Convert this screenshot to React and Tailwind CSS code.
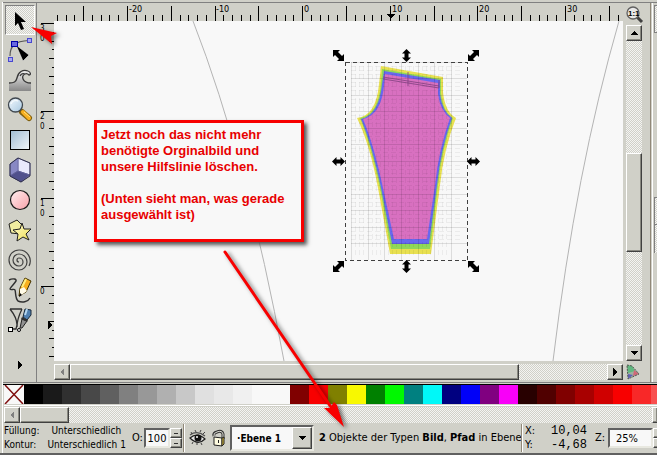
import React from 'react';

const STIPPLE =
  'bg-[repeating-conic-gradient(#f4f4f2_0_25%,#d0d0c8_0_50%)] bg-[length:2px_2px]';
const RAISED =
  'border border-t-white border-l-white border-r-[#404040] border-b-[#404040] bg-[#d0d0c8] shadow-[inset_-1px_-1px_0_#888880]';
const UI_FONT = "font-['DejaVu_Sans_Condensed','DejaVu_Sans',sans-serif]";

const SWATCHES = [
  '#000000', '#1a1a1a', '#303030', '#484848', '#606060', '#808080', '#989898',
  '#b0b0b0', '#c8c8c8', '#e0e0e0', '#e8e8e8', '#f0f0f0', '#f8f8f8', '#f8f8f8',
  '#800000', '#f80000', '#808000', '#f8f800', '#008000', '#00f800', '#008080',
  '#00f8f8', '#000080', '#0000f8', '#800080', '#f800f8', '#280000', '#500000',
  '#800000', '#a80000', '#d00000', '#f80000', '#f82828', '#f85050', '#f87878',
];

function Triangle({ dir, color = '#000' }) {
  const paths = {
    up: 'M0 6 4 2 8 6z',
    down: 'M0 2h8L4 6z',
    left: 'M6 0v8L2 4z',
    right: 'M2 0v8l4-4z',
  };
  return (
    <svg width="8" height="8" viewBox="0 0 8 8" shapeRendering="crispEdges">
      <path d={paths[dir]} fill={color} />
    </svg>
  );
}

function ScrollButton({ dir, color }) {
  return (
    <button
      type="button"
      aria-label={`Scroll ${dir}`}
      className={`flex h-4 w-4 shrink-0 items-center justify-center ${RAISED}`}
    >
      <Triangle dir={dir} color={color} />
    </button>
  );
}

const TOOLS = [
  {
    name: 'Select',
    art: <path d="M10 7v14l3-3 3 7 3-1-3-7h5z" fill="#000" />,
  },
  {
    name: 'Edit nodes',
    art: (
      <g>
        <path d="M5 21C5 12 9 6 24 5.500" fill="none" stroke="#555" strokeWidth="1.200" />
        <rect x="3.500" y="22.500" width="4" height="4" fill="#a8a8f0" stroke="#4848d0" />
        <rect x="22.500" y="3.500" width="4" height="4" fill="#a8a8f0" stroke="#4848d0" />
        <path d="M11 10l13 10-6 6z" fill="#000" stroke="#fff" strokeWidth=".5" />
        <rect x="6.500" y="6.500" width="6" height="5" fill="#6868e0" stroke="#0000a8" />
      </g>
    ),
  },
  {
    name: 'Tweak',
    art: (
      <g>
        <path d="M4 26v-8c5 0 7-1 8-5 1-6 6-9 12-7 3 1 3 4 1 5-1-3-6-3-6 1 0 5 3 6 7 6v8z" fill="url(#tweak)" />
        <path d="M4 18c5 0 7-1 8-5 1-6 6-9 11-7 3 1 3 4 1 4-1-1-2-2-4-1-4 2-3 9 6 9M15 11c1-2 3-3 5-2" fill="none" stroke="#383838" strokeWidth="1.300" />
      </g>
    ),
  },
  {
    name: 'Zoom',
    art: (
      <g>
        <path d="M17 17l7 6" stroke="#806010" strokeWidth="6" strokeLinecap="round" />
        <path d="M18 17l6 6" stroke="#f8b020" strokeWidth="4" strokeLinecap="round" />
        <path d="M19 17l6 5" stroke="#ffe080" strokeWidth="1" />
        <circle cx="10.500" cy="10" r="7" fill="url(#glass)" stroke="#404850" strokeWidth="1.300" />
        <path d="M6 9c1-3 4-4 7-3" fill="none" stroke="#fff" />
      </g>
    ),
  },
  {
    name: 'Rectangle',
    art: <rect x="5.500" y="5.500" width="19" height="19" fill="url(#box)" stroke="#000" />,
  },
  {
    name: '3D box',
    art: (
      <g strokeWidth="1" strokeLinejoin="round">
        <path d="M13 3l12 5v13l-9 6-11-6V9z" fill="#a8a8e0" />
        <path d="M13 3l12 5v12l-12-4z" fill="#e8e8fc" stroke="#9090c0" />
        <path d="M13 3v13l-8 5V9z" fill="#8888c4" stroke="#7070a8" />
        <path d="M5 21l8-5 12 4-9 7z" fill="#50508c" stroke="#606098" />
        <path d="M5 9l8-6 12 5v13l-9 6-11-6z" fill="none" stroke="#303048" />
      </g>
    ),
  },
  {
    name: 'Ellipse',
    art: <circle cx="15" cy="15" r="9.500" fill="url(#pink)" stroke="#181818" strokeWidth="1.200" />,
  },
  {
    name: 'Star',
    art: (
      <g stroke="#202020" strokeLinejoin="round">
        <path d="M4 9l8-4 6 6-3 8-9-1z" fill="#f0eca0" />
        <path d="M17 8l2 6 7 0-5 5 3 6-6-3-6 4 1-7-5-4 7-1z" fill="url(#gold)" />
      </g>
    ),
  },
  {
    name: 'Spiral',
    art: (
      <path
        d="M14 17a2 2 0 0 1 0-4a4 4 0 0 1 0 8a6 6 0 0 1 0-12a8 8 0 0 1 0 16a10 10 0 0 1 0-20a11 11 0 0 1 10 16"
        fill="none" stroke="#404040" strokeWidth="1.200"
      />
    ),
  },
  {
    name: 'Pencil',
    art: (
      <g>
        <path d="M4 5c4-2 8-1 7 1-2 3-6 7-6 8 1 2 4-1 5 1 1 3 0 8 3 11 4 2 10 1 12-3" fill="none" stroke="#303030" strokeWidth="1.400" />
        <path d="M14 21l1-8 5-10 6 3-5 11z" fill="#f8b020" stroke="#403000" strokeLinejoin="round" />
        <path d="M15 14l4-2 3 4-7 5z" fill="#fffbe8" />
        <path d="M17 12l4-8" stroke="#fff080" strokeWidth="2" />
        <path d="M14 22l1-4 2 2z" fill="#000" />
      </g>
    ),
  },
  {
    name: 'Calligraphy',
    art: (
      <g>
        <path d="M5 4h12M5 4c4 5 7 11 7 16l-1 4H6M17 4c-2 4-5 10-5 18" fill="none" stroke="#303030" strokeWidth="1.300" />
        <rect x="3.500" y="22.500" width="4" height="4" fill="#fff" stroke="#000" />
        <circle cx="14" cy="25" r="1.500" fill="#fff" stroke="#000" />
        <path d="M15 23l2-9 5 2-5 7z" fill="#909090" stroke="#202020" />
        <path d="M18 12l2-8 6 1 0 5-4 5z" fill="#5080b0" stroke="#182838" />
        <path d="M20 10l2-6" stroke="#b8d8f0" strokeWidth="2" />
        <path d="M17 12l6 3-1 2-6-3z" fill="#303030" />
      </g>
    ),
  },
];

function Gradients() {
  return (
    <svg width="0" height="0" className="absolute" aria-hidden="true">
      <defs>
        <linearGradient id="tweak" x2="0" y2="1"><stop stopColor="#f0f0f0" /><stop offset="1" stopColor="#888" /></linearGradient>
        <linearGradient id="glass" x2="1" y2="1"><stop stopColor="#f4faff" /><stop offset="1" stopColor="#a8c8e0" /></linearGradient>
        <linearGradient id="box" x2="1" y2="1"><stop stopColor="#a0bcd4" /><stop offset="1" stopColor="#f0f6fa" /></linearGradient>
        <linearGradient id="pink" x2="1" y2="1"><stop stopColor="#fff0f0" /><stop offset="1" stopColor="#f8a0a8" /></linearGradient>
        <linearGradient id="gold" x2="1" y2="1"><stop stopColor="#fffcd0" /><stop offset="1" stopColor="#f0e050" /></linearGradient>
      </defs>
    </svg>
  );
}

function Toolbox() {
  return (
    <div className="flex w-[33px] shrink-0 flex-col items-center border-r border-[#808080] pt-[2px]">
      {TOOLS.map((tool, i) => (
        <button
          key={tool.name}
          type="button"
          aria-label={tool.name}
          className={`h-[30px] w-[30px] shrink-0 ${i === 0 ? `${STIPPLE} border border-t-[#808080] border-l-[#808080] border-r-white border-b-white` : ''}`}
        >
          <svg width="30" height="30" viewBox="0 0 30 30" className={i === 0 ? '-m-px' : ''}>{tool.art}</svg>
        </button>
      ))}
      <button type="button" aria-label="More tools" className="mt-auto mb-3 flex h-[10px] w-[30px] items-center justify-center">
        <Triangle dir="right" />
      </button>
    </div>
  );
}

const TOP_TICKS = Array.from({ length: 65 }, (_, i) => i);
const SIDE_TICKS = Array.from({ length: 39 }, (_, i) => i);

function TopRuler() {
  return (
    <svg width="569" height="18" viewBox="54 3 569 18" className="block shrink-0" shapeRendering="crispEdges">
      {TOP_TICKS.map((i) => {
        const x = Math.round(127 + (i - 8) * 8.76);
        const top = (i - 8) % 5 === 0 ? 6 : 15;
        return <rect key={i} x={x} y={top} width="1" height={21 - top} />;
      })}
      {[-20, -10, 0, 10, 20, 30].map((n) => (
        <text key={n} x={Math.round(304 + n * 8.76)} y="12" className="font-['DejaVu_Sans_Condensed','DejaVu_Sans',sans-serif] text-[9px]">{n}</text>
      ))}
      <path d="M386 14h9l-4 5z" />
    </svg>
  );
}

function SideRuler() {
  return (
    <svg width="17" height="358" viewBox="37 3 17 358" className="block shrink-0" shapeRendering="crispEdges">
      {SIDE_TICKS.map((i) => {
        const w = i % 10 === 0 ? 13 : i % 2 === 0 ? 5 : 2;
        return <rect key={i} x={54 - w} y={Math.round(23 + i * 8.76)} width={w} height="1" />;
      })}
      {['30', '20', '10', '0'].map((label, i) =>
        label.split('').map((digit, j) => (
          <text key={`${label}${j}`} x="40" y={Math.round(31 + i * 87.6) + j * 10} className="font-['DejaVu_Sans_Condensed','DejaVu_Sans',sans-serif] text-[8px]">{digit}</text>
        )),
      )}
      <path d="M48 321v8l5-4z" />
    </svg>
  );
}

const HANDLE = 'M-6.500 0l4.500-4.500v2.500h4v-2.500l4.500 4.500-4.500 4.500v-2.500h-4v2.500z';
const CORNER = 'M-5.500-5.500h7l-2 2 4 4 2-2v7h-7l2-2-4-4-2 2z';
const HANDLES = [
  [338.5, 55.5, 0, CORNER], [406.5, 55.5, 90, HANDLE], [473.5, 55.5, 90, CORNER],
  [338.5, 161.5, 0, HANDLE], [473.5, 161.5, 0, HANDLE],
  [338.5, 266.5, 90, CORNER], [406.5, 266.5, 90, HANDLE], [473.5, 266.5, 0, CORNER],
];
const GRID_X = [351, 368, 384, 401, 418, 434, 451];
const GRID_Y = [62, 78, 95, 111, 128, 144, 161, 177, 194, 210, 227, 243];

function Drawing() {
  return (
    <svg width="569" height="340" viewBox="54 21 569 340" className="block">
      <g fill="none" stroke="#b4b4b4">
        <path d="M193 21Q247 160 284 361" />
        <path d="M619 21Q576 170 553 361" />
      </g>
      <path d="M381 66L443 77V92Q445 112 456 118Q444 148 440 185L431 254H390L378 188Q370 145 357 118Q376 116 379 84z" fill="#e8e050" />
      <path d="M382 69L441 79V93Q443 112 453 118Q442 148 438 185L430 249H391L380 188Q371 145 360 118Q378 115 381 84z" fill="#90d858" />
      <path d="M384 71L440 80V94Q442 111 452 118Q441 148 437 185L429 244H392L381 188Q372 145 361 119Q379 115 382 84z" fill="#6868f0" />
      <path d="M385 74L438 83V94Q440 110 450 118Q439 148 435 185L427 239H394L383 188Q374 145 363 119Q381 115 384 86z" fill="#d870c0" />
      <g stroke="#000" shapeRendering="crispEdges">
        <g strokeOpacity=".05" strokeDasharray="5 3">
          {GRID_X.slice(0, -1).map((x) => [4, 8, 12].map((d) => <path key={x + d} d={`M${x + d}.5 66V256`} />))}
          {GRID_Y.slice(0, -1).map((y) => [4, 8, 12].map((d) => <path key={y + d} d={`M351 ${y + d}.5H462`} />))}
        </g>
        <g strokeOpacity=".11">
          {GRID_X.map((x) => <path key={x} d={`M${x}.5 62V260`} />)}
          {GRID_Y.map((y) => <path key={y} d={`M351 ${y}.5H467`} />)}
        </g>
      </g>
      <path d="M383 77l56 9M383 79l56 9M408 72v14M439 80v8" stroke="#804080" strokeOpacity=".8" fill="none" />
      <rect x="345.500" y="62.500" width="122" height="198" fill="none" stroke="#404040" strokeDasharray="4 3" shapeRendering="crispEdges" />
      {HANDLES.map(([x, y, r, d]) => (
        <path key={`${x}-${y}`} d={d} transform={`translate(${x} ${y}) rotate(${r})`} />
      ))}
    </svg>
  );
}

function Canvas() {
  return (
    <div className="relative min-h-0 flex-1 overflow-hidden bg-[#f8f8f8]">
      <Drawing />
      <p className="absolute top-[99px] left-[40px] h-[122px] w-[210px] border-3 border-[#f80000] bg-[#f8f8f8] px-1 pt-1 font-['Liberation_Sans',sans-serif] text-[13px] leading-4 font-bold whitespace-nowrap text-[#e80000] shadow-[3px_3px_4px_#555]">
        Jetzt noch das nicht mehr<br />
        benötigte Orginalbild und<br />
        unsere Hilfslinie löschen.<br />
        <br />
        (Unten sieht man, was gerade<br />
        ausgewählt ist)
      </p>
    </div>
  );
}

function RightScroll() {
  return (
    <div className="flex w-[27px] shrink-0 flex-col items-start pt-[2px] pl-[3px]">
      <button type="button" aria-label="Zoom 1:1" className="h-5 w-4 shrink-0">
        <svg width="18" height="18" viewBox="0 0 18 18">
          <path d="M11 11l5 5" stroke="#404040" strokeWidth="3" />
          <circle cx="7" cy="7" r="6" fill="#e8e8e8" stroke="#606060" strokeWidth="1.300" />
          <text x="2" y="10" className="font-['Liberation_Sans',sans-serif] text-[8px] font-bold">1:1</text>
        </svg>
      </button>
      <div className={`flex min-h-0 w-4 flex-1 flex-col ${STIPPLE}`}>
        <ScrollButton dir="up" />
        <div className="flex-[112]" />
        <div className={`h-[99px] ${RAISED}`} />
        <div className="flex-[93]" />
        <ScrollButton dir="down" />
      </div>
      <svg width="16" height="21" viewBox="0 0 16 21" className="shrink-0">
        <path d="M1 4l5 1 7 8-11 5z" fill="#a0b0a0" />
        <path d="M1 4l5 1 3 5-7 2z" fill="#60b880" />
        <path d="M8 9l5 4-6 2z" fill="#d06878" />
        <path d="M2 13l5 1-5 4z" fill="#6060b8" />
        <path d="M1 4l5 1 7 8-11 5z" fill="none" stroke="#505850" strokeDasharray="2 1" />
      </svg>
    </div>
  );
}

function DockEdge() {
  return (
    <div className="flex w-[7px] shrink-0 flex-col border-l border-[#908878] pl-px">
      <div className="flex flex-1 flex-col border-l border-white pt-[2px] pl-px">
        <div className={`h-7 border border-r-0 border-[#808080] ${STIPPLE}`} />
        <div className="h-[164px]" />
        <div className={`h-7 border border-r-0 border-[#808080] ${STIPPLE}`} />
        <div className={`h-7 border-l border-[#808080] ${STIPPLE}`} />
      </div>
    </div>
  );
}

function Palette() {
  return (
    <div className="flex h-[19px] shrink-0 overflow-hidden">
      <button type="button" aria-label="None" className="h-[19px] w-5 shrink-0 bg-[#f8f8f8]">
        <svg width="20" height="19" viewBox="0 0 20 19" className="block">
          <path d="M1 0l18 19M19 0L1 19" stroke="#801010" strokeWidth="1.500" />
        </svg>
      </button>
      {SWATCHES.map((color, i) => (
        <button key={i} type="button" aria-label={color} className="h-[19px] w-[19px] shrink-0" style={{ backgroundColor: color }} />
      ))}
    </div>
  );
}

function Spin() {
  return (
    <div className="flex h-5 w-3 shrink-0 flex-col">
      {['Increase', 'Decrease'].map((n) => (
        <button key={n} type="button" aria-label={n} className={`flex h-[10px] items-center justify-center ${RAISED}`}>
          <span className="h-px w-1 bg-[#303030]" />
        </button>
      ))}
    </div>
  );
}

const SUNKEN = 'border-2 border-t-[#606060] border-l-[#606060] border-r-[#e8e8e0] border-b-[#e8e8e0] bg-[#f8f8f8]';

function StatusBar() {
  return (
    <footer className={`flex h-[30px] shrink-0 items-center overflow-hidden whitespace-nowrap text-[11px] text-black ${UI_FONT}`}>
      <div className="grid w-32 shrink-0 grid-cols-[auto_1fr] gap-x-2 text-[10px] leading-[14px]">
        <span>Füllung:</span>
        <span className="pl-1">Unterschiedlich</span>
        <span>Kontur:</span>
        <span>Unterschiedlich 1</span>
      </div>
      <label htmlFor="opacity" className="w-3 shrink-0">O:</label>
      <input id="opacity" defaultValue="100" className={`h-5 w-[26px] shrink-0 text-center ${SUNKEN}`} />
      <Spin />
      <div className="ml-px h-7 w-[2px] shrink-0 border-l border-[#908878] bg-white" />
      <button type="button" aria-label="Layer visibility" className="ml-1 shrink-0">
        <svg width="18" height="18" viewBox="0 0 18 18">
          <path d="M1 9q7-6 15 1-7 7-15-1z" fill="#e8e8e8" stroke="#202020" strokeWidth="1.200" />
          <path d="M1 6q7-5 15 1" fill="none" stroke="#505050" strokeWidth="1.200" />
          <circle cx="9" cy="9" r="3.500" fill="#101010" />
          <circle cx="8" cy="8" r="1" fill="#fff" />
          <path d="M3 5L2 3M7 3L6 1M11 3l1-2M14 5l2-2M4 13l-1 2M8 14v2M12 14l1 2" stroke="#404040" />
        </svg>
      </button>
      <button type="button" aria-label="Layer lock" className="ml-1 shrink-0">
        <svg width="16" height="18" viewBox="0 0 16 18">
          <path d="M3 7q-1-3 3-4 5-2 6 2v5" fill="none" stroke="#303030" strokeWidth="3" />
          <path d="M3 7q-1-3 3-4 5-2 6 2v5" fill="none" stroke="#e0e0d8" strokeWidth="1" />
          <path d="M3 8l8 1v8l-8-1z" fill="#fffce0" stroke="#202020" />
          <path d="M11 9l2-1v7l-2 2z" fill="#e8c840" stroke="#202020" />
          <path d="M7 11h1v3H7z" fill="#202020" />
        </svg>
      </button>
      <div className={`relative ml-[3px] h-[26px] w-[84px] shrink-0 ${SUNKEN}`}>
        <select aria-label="Layer" className="h-full w-full appearance-none pl-[5px] text-[10px] font-bold">
          <option>·Ebene 1</option>
        </select>
        <span className={`pointer-events-none absolute top-0 right-0 flex h-[22px] w-5 items-center justify-center ${RAISED}`}>
          <Triangle dir="down" />
        </span>
      </div>
      <p className="ml-[5px] min-w-0 flex-1 overflow-hidden">
        <b>2</b> Objekte der Typen <b>Bild</b>, <b>Pfad</b> in Ebene
      </p>
      <div className="h-7 w-[2px] shrink-0 border-l border-[#908878] bg-white" />
      <div className="ml-[2px] grid w-[62px] shrink-0 grid-cols-[auto_1fr] leading-[14px]">
        <span>X:</span>
        <span className="text-right font-['Liberation_Mono',monospace] text-[12px]">10,04</span>
        <span>Y:</span>
        <span className="text-right font-['Liberation_Mono',monospace] text-[12px]">-4,68</span>
      </div>
      <label htmlFor="zoom" className="ml-2 w-[13px] shrink-0">Z:</label>
      <input id="zoom" defaultValue="25%" className={`h-5 w-[45px] shrink-0 pl-[6px] ${SUNKEN}`} />
      <div className="w-1 shrink-0 overflow-hidden"><Spin /></div>
    </footer>
  );
}

function Pointers() {
  return (
    <svg width="657" height="455" viewBox="0 0 657 455" className="pointer-events-none absolute top-0 left-0" aria-hidden="true">
      <g fill="#f80000" className="drop-shadow-[3px_2px_2px_#0008]">
        <path d="M225 252L333 410" stroke="#f80000" strokeWidth="3" strokeLinecap="round" />
        <path d="M344 427l-20-19 6 0 4-6 3 3z" />
        <path d="M31 27l26 6-6 3 1 8z" />
      </g>
    </svg>
  );
}

export default function App() {
  return (
    <div className="relative flex h-screen min-h-[400px] flex-col overflow-hidden border-b-2 border-[#606060] bg-[#d0d0c8] pt-[2px] pl-[2px]">
      <Gradients />
      <main className="flex min-h-0 flex-1 flex-col border-l border-white">
        <div className="flex min-h-0 flex-1 border-t border-[#808080] pl-px">
          <Toolbox />
          <SideRuler />
          <div className="flex min-w-0 flex-1 flex-col">
            <TopRuler />
            <Canvas />
            <div className={`mt-[3px] mb-[2px] flex h-4 shrink-0 ${STIPPLE}`}>
              <ScrollButton dir="left" color="#808080" />
              <div className={`flex-[449] ${RAISED}`} />
              <div className="flex-[88]" />
              <ScrollButton dir="right" />
            </div>
          </div>
          <RightScroll />
          <DockEdge />
        </div>
        <div className="flex shrink-0 flex-col border-t border-[#808080] pl-px">
          <div className="-ml-px mt-px h-px bg-black" />
          <Palette />
          <div className="mt-px mb-px h-px bg-white" />
          <div className={`flex h-4 shrink-0 ${STIPPLE}`}>
            <ScrollButton dir="left" color="#808080" />
            <div className={`w-[49px] ${RAISED}`} />
            <div className="flex-1" />
            <div className={`w-[5px] border-r-0 ${RAISED}`} />
          </div>
          <StatusBar />
        </div>
      </main>
      <Pointers />
    </div>
  );
}
